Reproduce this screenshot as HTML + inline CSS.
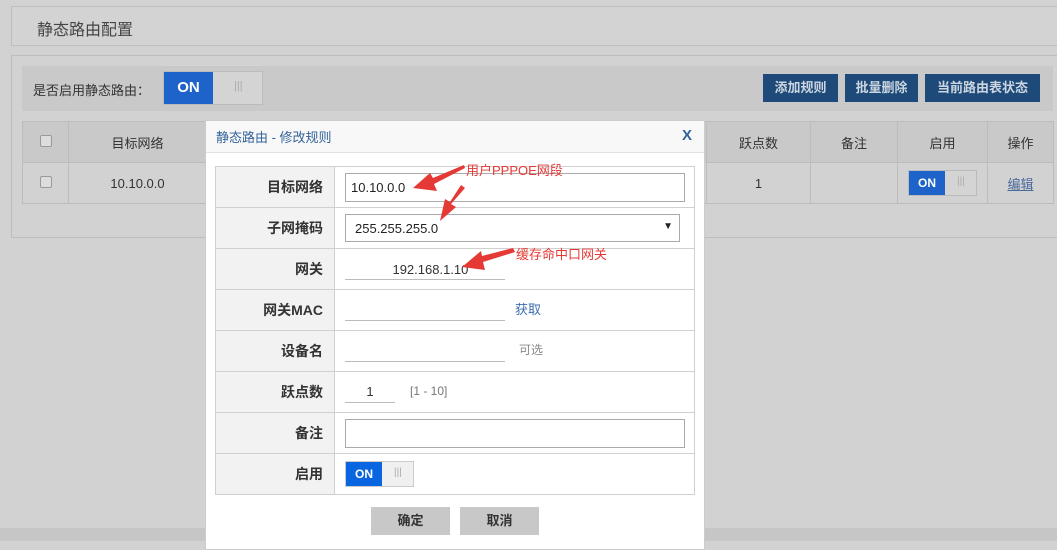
<!DOCTYPE html>
<html><head><meta charset="utf-8"><style>
*{box-sizing:border-box;margin:0;padding:0}
body{width:1057px;height:541px;overflow:hidden;background:#d2d2d2;font-family:"Liberation Sans","Noto Sans CJK SC",sans-serif;font-size:13px;color:#333;position:relative}
.a{position:absolute}
.hdr{left:11px;top:6px;width:1050px;height:40px;border:1px solid #bdbdbd;background:#d3d3d3;font-size:16px;color:#444;padding:9px 0 0 25px}
.pan{left:11px;top:55px;width:1050px;height:183px;border:1px solid #bdbdbd;background:#d2d2d2}
.tb{left:22px;top:66px;width:1031px;height:45px;background:#c9c9c9}
.btn{top:74px;height:28px;background:#1d4a79;color:#ccd5e0;font-weight:bold;text-align:center;line-height:28px;font-size:13px}
table{border-collapse:collapse}
.bt td{border:1px solid #bcbcbc;text-align:center;height:41px;color:#333}
.cb{display:inline-block;width:12px;height:12px;border:1px solid #999;border-radius:2px;background:#ddd}
.tog{display:inline-block;position:relative;border:1px solid #bbb;background:#d4d4d4}
.tog b{position:absolute;left:0;top:0;bottom:0;background:#1d63c9;color:#fff;text-align:center}
.dlg{left:205px;top:120px;width:500px;height:430px;background:#fff;border:1px solid #ccc}
.dh{height:32px;background:#f8f8f8;border-bottom:1px solid #e2e2e2;color:#33639a;font-size:13px;padding:6px 0 0 10px}
.ft td{border:1px solid #d0d0d0;height:41px;vertical-align:middle}
.ft td.l{width:119px;background:#f2f2f2;text-align:right;padding-right:11px;font-weight:bold;font-size:14px;color:#333}
.ft td.r{padding-left:10px}
.inp{border:1px solid #aaa;height:29px;padding:6px 0 0 5px;font-size:13px;color:#222}
.ul{border-bottom:1px solid #bbb;height:22px;display:inline-block;vertical-align:middle}
.gb{top:507px;height:28px;background:#c8c8c8;font-weight:bold;text-align:center;line-height:28px;font-size:13px;color:#333}
.red{color:#e53935;font-size:13px}
</style></head><body>
<div class="a hdr">静态路由配置</div>
<div class="a pan"></div>
<div class="a tb"><span class="a" style="left:11px;top:14px;color:#333">是否启用静态路由：</span>
<span class="tog a" style="left:141px;top:5px;width:100px;height:34px"><b style="width:49px;line-height:32px;font-size:15px">ON</b><span class="a" style="left:70px;top:8px;color:#aaa;font-size:11px">|||</span></span></div>
<div class="a btn" style="left:763px;width:75px">添加规则</div>
<div class="a btn" style="left:845px;width:73px">批量删除</div>
<div class="a btn" style="left:925px;width:115px">当前路由表状态</div>
<table class="a bt" style="left:22px;top:121px;width:1032px">
<tr style="background:#c9c9c9"><td style="width:46px"><span class="cb"></span></td><td style="width:138px">目标网络</td><td style="width:500px"></td><td style="width:104px">跃点数</td><td style="width:87px">备注</td><td style="width:90px">启用</td><td>操作</td></tr>
<tr><td><span class="cb"></span></td><td>10.10.0.0</td><td></td><td>1</td><td></td><td><span class="tog" style="width:69px;height:26px;vertical-align:middle"><b style="width:36px;line-height:24px;font-size:12px">ON</b><span class="a" style="left:48px;top:5px;color:#aaa;font-size:10px">|||</span></span></td><td><u style="color:#4a6a9a">编辑</u></td></tr>
</table>
<div class="a" style="left:0;top:528px;width:1057px;height:13px;background:#c6c6c6"></div>
<div class="a dlg"><div class="dh">静态路由 - 修改规则<span class="a" style="right:12px;top:6px;font-weight:bold;font-size:15px;color:#33639a">X</span></div></div>
<table class="a ft" style="left:215px;top:166px;width:480px;background:#fff">
<tr><td class="l">目标网络</td><td class="r"><div class="inp" style="width:340px">10.10.0.0</div></td></tr>
<tr><td class="l">子网掩码</td><td class="r"><div class="inp" style="width:335px;height:28px;padding-left:9px;position:relative">255.255.255.0<span class="a" style="right:6px;top:6px;font-size:10px">▼</span></div></td></tr>
<tr><td class="l">网关</td><td class="r"><span class="ul" style="width:160px;text-align:center;padding-top:4px">&nbsp;&nbsp;&nbsp;192.168.1.10</span></td></tr>
<tr><td class="l">网关MAC</td><td class="r"><span class="ul" style="width:160px"></span><span style="color:#3b6eb0;margin-left:10px">获取</span></td></tr>
<tr><td class="l">设备名</td><td class="r"><span class="ul" style="width:160px"></span><span style="color:#888;margin-left:14px;font-size:12px">可选</span></td></tr>
<tr><td class="l">跃点数</td><td class="r"><span class="ul" style="width:50px;text-align:center;padding-top:3px">1</span><span style="color:#777;margin-left:15px;font-size:12px">[1 - 10]</span></td></tr>
<tr><td class="l">备注</td><td class="r"><div class="inp" style="width:340px"></div></td></tr>
<tr><td class="l">启用</td><td class="r"><span class="tog" style="width:69px;height:26px;vertical-align:middle;background:#f0f0f0;border-color:#ccc"><b style="width:36px;line-height:24px;font-size:12px;background:#0a66e0">ON</b><span class="a" style="left:48px;top:5px;color:#aaa;font-size:10px">|||</span></span></td></tr>
</table>
<div class="a gb" style="left:371px;width:79px">确定</div>
<div class="a gb" style="left:460px;width:79px">取消</div>
<span class="a red" style="left:466px;top:160px">用户PPPOE网段</span>
<span class="a red" style="left:516px;top:244px">缓存命中口网关</span>
<svg class="a" style="left:0;top:0" width="1057" height="541"><g fill="#e53935">
<polygon points="464,165 433,178 430,173 413,188 437,191 434,184 465,168"/>
<polygon points="461,185 450,202 445,199 440,221 456,207 451,204 465,188"/>
<polygon points="513,248 482,256 481,251 462,267 485,270 483,262 515,252"/>
</g></svg>
</body></html>
